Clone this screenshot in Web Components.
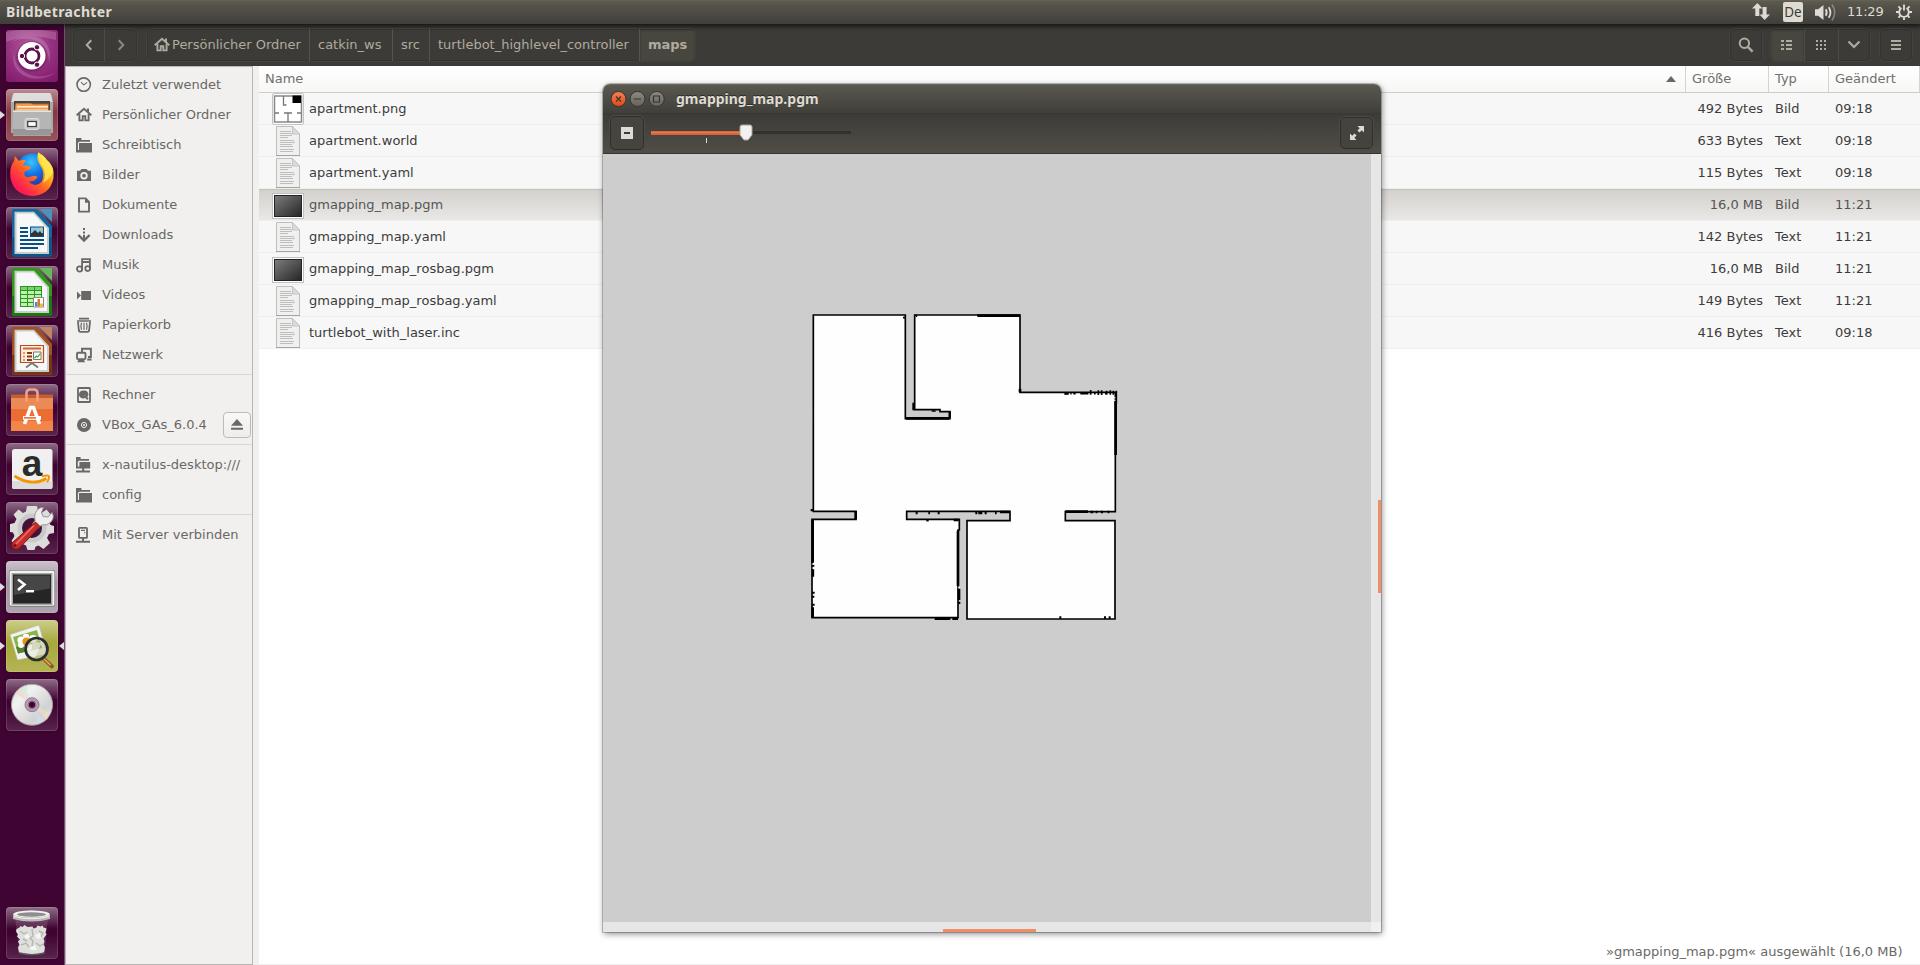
<!DOCTYPE html>
<html lang="de">
<head>
<meta charset="utf-8">
<title>Bildbetrachter</title>
<style>
html,body{margin:0;height:100%;overflow:hidden;background:#fff}
body{font:13px/16px "DejaVu Sans",sans-serif;color:#3c3c3c}
</style>
</head>
<body>
<unity-desktop></unity-desktop>
<script>
const define = (name, css, html) => {
  const t = document.createElement('template');
  t.innerHTML = `<style>*{box-sizing:border-box}${css}</style>${html}`;
  customElements.define(name, class extends HTMLElement {
    constructor() { super(); this.attachShadow({mode: 'open'}).append(t.content.cloneNode(true)); }
  });
};

/* Symbolic 16x16 icons, painted in currentColor */
const S = 'fill="none" stroke="currentColor"';
const SYMBOLS = {
  recent: `<circle cx="7.7" cy="7.6" r="6.7" ${S} stroke-width="1.6"/><path d="M5 5.2L7.7 7.9L11.2 5.4" ${S} stroke-width="1.1"/>`,
  home: `<path d="M.7 8.2L8 1.8l7.3 6.4" ${S} stroke-width="2"/><path d="M11 1.5h2v4h-2z" fill="currentColor"/><path d="M3.4 7v6.4h3.3V9.2h2.6v4.2h3.3V7" ${S} stroke-width="1.9"/>`,
  folder: `<path d="M0 1h5.4v2H14v1.8H3.2L1.9 6v9H0zM3 6h13v9.4H0V13h3z" fill="currentColor"/>`,
  pictures: `<path d="M1 3.8h3L5.5 2h5L12 3.8h3V14H1z" fill="currentColor"/><circle cx="8" cy="8.7" r="2.8" fill="currentColor" stroke="#f1f0ee" stroke-width="1.8"/>`,
  documents: `<path d="M3 1.4h6.6L13 5v9.6H3z" ${S} stroke-width="1.9"/><path d="M9 1v4.7h4z" fill="currentColor"/>`,
  downloads: `<path d="M7 1h2v2H7zM7 4.4h2v2H7zM7 7.8h2v4H7z" fill="currentColor"/><path d="M2.4 8L8 13.5 13.6 8" ${S} stroke-width="2.4"/>`,
  music: `<path d="M6.1 12.4V2.2h7.8v9.6M6.1 5h7.8" ${S} stroke-width="1.8"/><circle cx="3.6" cy="12" r="2.6" ${S} stroke-width="1.8"/><circle cx="11.7" cy="11.6" r="2.4" ${S} stroke-width="1.8"/>`,
  videos: `<path d="M6 4h9v9H5.2V4zM1 4.5l4 4-4 4z" fill="currentColor"/>`,
  trash: `<path d="M3 1.6h10M1 4h14" ${S} stroke-width="1.7"/><path d="M2 5l.9 8.5q.2 1.3 1.5 1.3h7.2q1.3 0 1.5-1.3L14 5" ${S} stroke-width="1.8"/><path d="M5.5 5.7q-1.3 3.8 0 7M8 5.7v7.2M10.5 5.7q1.3 3.8 0 7" ${S} stroke-width="1.2"/>`,
  network: `<path d="M6 5V1.8h8.9V10H12" ${S} stroke-width="1.9"/><rect x="1" y="5.7" width="8.5" height="6.4" rx="1" ${S} stroke-width="1.9"/><path d="M3 12h4.6l1.5 3.2H1.2zM11.5 11.6h4v1.8H11z" fill="currentColor"/>`,
  computer: `<rect x="2" y="1" width="12" height="14" rx=".6" ${S} stroke-width="1.8"/><path d="M8 3.6a4 4 0 1 0 1 7.3L8.2 8l3.2 2.3A4 4 0 0 0 8 3.6z" fill="currentColor"/><path d="M8.3 8.6l3.6 3.6" ${S} stroke-width="2"/>`,
  disc: `<circle cx="8" cy="8" r="7" fill="currentColor"/><circle cx="8" cy="8" r="2.6" fill="none" stroke="#f1f0ee" stroke-width="1"/><circle cx="8" cy="8" r="1" fill="#f1f0ee"/>`,
  remote: `<path d="M0 0h4.6v2H13v1.8H2.7L1.8 5v6H0zM3.4 5h10.8v6.5H0V9.6h3.4zM6.2 11h2v3h-2zM0 13.6h14v2H0z" fill="currentColor"/>`,
  server: `<rect x="3" y=".9" width="8" height="10" rx=".6" ${S} stroke-width="1.8"/><path d="M5 3.4h4M8 5.8h1.4" ${S} stroke-width="1.1"/><path d="M6 11h2v2.8H6zM0 13.8h14v2H0z" fill="currentColor"/>`,
  eject: `<path d="M8 2l6 6.8H2zM2 10.8h12v2H2z" fill="currentColor"/>`,
  back: `<path d="M10.6 2.6L5.4 8l5.2 5.4" ${S} stroke-width="2.2"/>`,
  forward: `<path d="M5.4 2.6L10.6 8l-5.2 5.4" ${S} stroke-width="2.2"/>`,
  search: `<circle cx="6.400" cy="6.200" r="4.700" ${S} stroke-width="2"/><path d="M9.600 9.600L14.600 14.600" ${S} stroke-width="2.400"/>`,
  list: `<path d="M2 3h3v2H2zM7 3h6v2H7zM2 7h3v2H2zM7 7h6v2H7zM2 11h3v2H2zM7 11h6v2H7z" fill="currentColor"/>`,
  grid: `<path d="M3 3h2v2H3zM7 3h2v2H7zM11 3h2v2h-2zM3 7h2v2H3zM7 7h2v2H7zM11 7h2v2h-2zM3 11h2v2H3zM7 11h2v2H7zM11 11h2v2h-2z" fill="currentColor"/>`,
  down: `<path d="M2.500 4.500L8 10l5.500-5.500" ${S} stroke-width="2.200"/>`,
  menu: `<path d="M3 3h10v2H3zM3 7h10v2H3zM3 11h10v2H3z" fill="currentColor"/>`,
  minus: `<path d="M2 2h12v12H2z" fill="currentColor"/><path d="M5 7h6v2H5z" fill="#3c3b37"/>`,
  expand: `<path d="M8.500 1H15v6.500l-2.200-2.200L10.500 7.600 8.400 5.500l2.300-2.300zM1 15V8.500l2.200 2.200L5.500 8.400l2.100 2.100-2.300 2.300L7.500 15z" fill="currentColor"/>`,
  traffic: `<path d="M5.400 0L0 5.500h3.300V13h4V5.500h3.200zM12.600 17L7.500 11.500h3.100V4h4v7.500H18z" fill="currentColor"/>`,
  volume: `<path d="M0 6h3l5-4.200v14.400L3 12H0z" fill="currentColor"/><path d="M10.200 6q1.800 3 0 6" ${S} stroke-width="1.700"/><path d="M13 4q3.200 5 0 10" ${S} stroke-width="1.700"/><path d="M16 1.500q5.500 7.500 0 15" ${S} stroke-width="1.500" opacity=".4"/>`,
  session: `<path d="M8.500.5v6.500" ${S} stroke-width="2"/><path d="M5.800 4.300a5.100 5.100 0 1 0 5.400 0" ${S} stroke-width="2"/><path d="M2.600 2.600l2 2M14.400 2.600l-2 2M0 8.500h3M17 8.500h-3M2.600 14.400l2-2M14.400 14.400l-2-2M8.500 17v-3" ${S} stroke-width="2"/>`
};
customElements.define('sym-icon', class extends HTMLElement {
  connectedCallback() {
    const n = this.getAttribute('name'), s = this.getAttribute('size') || 16, b = this.getAttribute('box') || 16;
    this.attachShadow({mode: 'open'}).innerHTML =
      `<style>:host{display:block;flex:none;width:${s}px;height:${s}px}svg{display:block;overflow:visible}</style><svg width="${s}" height="${s}" viewBox="0 0 ${b} ${b}">${SYMBOLS[n]}</svg>`;
  }
});

/* Launcher artwork on a 52x52 tile */
const office = (a, b, c, inner) => `
<path d="M8 2h23l15 17v29q0 1.500-1.500 1.500h-37Q6 49.500 6 48V4q0-2 2-2z" fill="${a}"/>
<path d="M6 30h40v18q0 1.500-1.500 1.500h-37Q6 49.500 6 48z" fill="${b}"/>
<path d="M8.500 4.800h19.500L43 21v26H8.500z" fill="#c9cccd"/><path d="M10.500 6.500h17L41 21.500V45H10.500z" fill="#f7f7f7"/>
<path d="M33.500 2H46v13z" fill="${c}"/>${inner}`;
const ART = {
  dash: `<defs><radialGradient id="g" cx=".45" cy=".3" r=".9"><stop offset="0" stop-color="#b25a9c"/><stop offset=".5" stop-color="#94307f"/><stop offset="1" stop-color="#7f1567"/></radialGradient></defs>
<rect width="52" height="52" rx="3" fill="url(#g)"/><g fill="#fff" opacity=".17"><path d="M3 14Q18 2 34 8q13 8 9 25 0-18-15-23-14-4-25 4z"/><path d="M8 22Q4 42 24 48q14 3 26-6-15 8-28 2Q8 37 8 22z"/><path d="M0 2Q20-3 50 2v8Q25 2 0 12z"/></g>
<circle cx="25.700" cy="26.500" r="15.300" fill="#5d0f4a" opacity=".35"/><circle cx="25.700" cy="25.700" r="13.800" fill="#fff"/>
<circle cx="26" cy="26" r="7" fill="none" stroke="#57134a" stroke-width="2.800"/><g fill="#57134a" stroke="#fff" stroke-width="1"><circle cx="16" cy="26" r="2.700"/><circle cx="31" cy="17.300" r="2.700"/><circle cx="31" cy="34.700" r="2.700"/></g>`,
  files: `<path d="M6 6h40l1 6v32H5V12z" fill="#a9a9a9"/><path d="M7.500 4h37l2 9H5.500z" fill="#ddd"/><path d="M8 12h36v10H8z" fill="#444"/><path d="M9 14.500h34V22H9z" fill="#b35c1c"/><path d="M10 14.500h15l2 1h15V22H9z" fill="#f39a4c"/><path d="M11 17h31v1.500H11z" fill="#fff0dd"/><path d="M11 20h31v1.500H11z" fill="#f6c38c"/>
<path d="M7 21.500h38V46q0 1-1 1H8q-1 0-1-1z" fill="#b5b5b5"/><path d="M7 21.500h38v1.500H7z" fill="#e4e4e4"/><path d="M7 40h38v6.500H7z" fill="#979797"/><rect x="19" y="29.500" width="14" height="11" rx="2" fill="#c8c8c8" stroke="#ddd"/><rect x="21.700" y="32.500" width="8.600" height="5" fill="#fff" stroke="#444" stroke-width="1.300"/>`,
  firefox: `<defs><radialGradient id="b" cx=".45" cy=".25" r=".7"><stop offset="0" stop-color="#39c5ff"/><stop offset=".5" stop-color="#1273e6"/><stop offset="1" stop-color="#30339c"/></radialGradient><linearGradient id="o" x1=".9" y1=".1" x2=".2" y2=".8"><stop offset="0" stop-color="#fff24a"/><stop offset=".35" stop-color="#ffa51a"/><stop offset=".65" stop-color="#ff5a28"/><stop offset="1" stop-color="#ff1a55"/></linearGradient></defs>
<circle cx="27" cy="23" r="17.500" fill="url(#b)"/>
<path d="M32 5q7 3 8.500 7Q49 18 47.500 30 44 47 26.500 48 8 47 4.500 30 3 19 8 13l1-5 4 5q4-1.500 7-.5l-3 4.500 7 1.500q2 2-1 3l-4.500 2.500q-1 2 .500 4 2.500 2 6 .5 4-1.500 6.500.5-3 5-9 4.500Q29 40 35.500 34 40 25 34 17q-4-6-2-12z" fill="url(#o)"/>
<path d="M32 4q0 9 5 15 4 8 0 16 9-6 10-12-1-7-6-11-4-5-9-8z" fill="#ffe64c" opacity=".9"/>`,
  writer: office('#0f689e', '#0b5687', '#4a93bd', `<g fill="#08507f"><path d="M14 20h8v2h-8zM14 24h8v2h-8zM14 28h8v2h-8zM14 32h24v2H14zM14 36h24v2H14zM14 40h18v2H14z"/><path d="M24 19.500h14V30H24z"/></g><path d="M25 20.500h12V26H25z" fill="#8ec6e4"/><path d="M25 29v-2l4-4 3 3 2-2 3 4v1z" fill="#333"/><circle cx="35.500" cy="21.700" r="1.200" fill="#f4c034"/>`),
  calc: office('#2c9a16', '#177a0c', '#66b95a', `<path d="M14 20h22v21H14z" fill="#2d9423"/><g fill="#bdf3ad"><path d="M15 21h6v3h-6zM22 21h6v3h-6zM29 21h6v3h-6z" fill="#75d566"/><path d="M15 25h6v3h-6zM22 25h6v3h-6zM29 25h6v3h-6zM15 29h6v3h-6zM22 29h6v3h-6zM29 29h6v3h-6zM15 33h6v3h-6zM22 33h6v3h-6zM29 33h6v3h-6zM15 37h6v3h-6zM22 37h6v3h-6z"/></g><path d="M27.500 31.500h10v9.500h-10z" fill="#fff" stroke="#888"/><path d="M29 36h2.500v4.500H29z" fill="#2c98e0"/><path d="M31.500 33H34v7.500h-2.500z" fill="#e0782c"/><path d="M34 37.500h3v3h-3z" fill="#f0be2c"/>`),
  impress: office('#a3501f', '#7c3410', '#c0855f', `<path d="M14.500 20.500h23v17h-23z" fill="#fbeee4" stroke="#b44f1a" stroke-width="1.200"/><path d="M17 22.500h18v2H17z" fill="#d3682b"/><g fill="#8c3c12"><path d="M21 27h5v2h-5zM21 30.500h5v2h-5zM21 34h5v2h-5z"/><path d="M17 27h2v2h-2zM17 30.500h2v2h-2zM17 34h2v2h-2z" fill="#e39463"/></g><path d="M27.500 27h7.500v7.500h-7.500z" fill="#fff" stroke="#777"/><path d="M28.500 33l2-2 1.200 1 2.600-3.500" fill="none" stroke="#37a32b" stroke-width="1.200"/><path d="M26 38l-6 4.500M26 38l6 4.500" stroke="#777" stroke-width="1.800"/>`),
  software: `<path d="M5 10.500h42v6H5z" fill="#c65d30"/><path d="M5 14h42v33H5z" fill="#ea6d33"/><path d="M5 14h42v11H5z" fill="#ec8a55"/><path d="M5 37h42v10H5z" fill="#f48548"/><path d="M20.500 17.500V9q0-3 3-3.500h5q3 .500 3 3.500v8.500" fill="none" stroke="#f2a183" stroke-width="2.600"/>
<path d="M18.500 40L24.500 23.500h3L33.500 40" fill="none" stroke="#fff" stroke-width="3.600"/><path d="M17 32h18v3.800H17z" fill="#fff"/><path d="M18 33.200h12v1.400H18z" fill="#e8591f"/>`,
  amazon: `<rect x="6" y="6" width="40.500" height="40" rx="2.500" fill="#f0f0f0"/><path d="M6 38h40.500v6q0 2-2 2H8q-2 0-2-2z" fill="#dcdcdc"/><text x="26" y="32.500" text-anchor="middle" font-family="Liberation Sans" font-weight="bold" font-size="37" fill="#2b2b2b">a</text><path d="M8.500 33q17 11 32 2.500" fill="none" stroke="#f79400" stroke-width="2.800"/><path d="M36 33.300q6-1.500 7 0 .500 2-2 6" fill="none" stroke="#f79400" stroke-width="2"/>`,
  settings: `<path d="M21 4h10l1 5.500 3.500 1.500 5-3.500 6 7-3.500 5 1.500 3.500 3.500 1v7l-5 1-2 4 3 5-6.500 6-5-3.500-3 1.300L28.500 48h-7L20 43.500l-3.500-1.500-5 3.500-6-6.500 3-5L7 30.500 4 30v-8l4.500-1 2-4-3-4.500 5-5L17 11l3-1.500z" fill="#dcdcdc"/><circle cx="26" cy="26" r="14.500" fill="#c9c9c9"/><circle cx="26" cy="26" r="10" fill="#42123a"/>
<path d="M29 18.500q-1.500-8 4-12 2-1.500 4.500-1l-2 5 1.500 4 5 .5 4-4.500q3 5-1 9.500-4 4-9.500 3l-4 4-5-5z" fill="#eee" stroke="#8d8d8d" stroke-width=".9"/><path d="M29.500 20l4.500 4.500-21 22q-3.500 1.800-6-.5-2-2.500-.5-5.500z" fill="#c92c28" stroke="#7f1512"/><path d="M28 23.500L10 42" stroke="#e8736c" stroke-width="1.600"/><circle cx="9" cy="43.500" r="1.500" fill="#7c0f0d"/>`,
  terminal: `<rect x="3" y="9" width="46" height="37" rx="2" fill="#858585"/><rect x="3.700" y="9.700" width="44.600" height="35" rx="1.500" fill="#f2f2f2"/><rect x="5.500" y="12" width="41" height="32" fill="#a6a6a6"/><rect x="7" y="13.500" width="38" height="29" fill="#252525"/><path d="M8 14.500h36v13L8 34z" fill="#464646"/><path d="M12 18.500l6.500 5L12 29" fill="none" stroke="#fff" stroke-width="2.600"/><path d="M20 29h8v2.400h-8z" fill="#fff"/>`,
  viewer: `<path d="M4 14.500L33 5l8 29-29.500 6z" fill="#f2f2f2" stroke="#b9b9a0" stroke-width=".6"/><path d="M7 17l24-7 5 18-24 5.500z" fill="#8bb54a"/><path d="M10 27l24-6 2 7-24 5.500z" fill="#55822d"/><g fill="#fff"><circle cx="15" cy="20" r="3.600"/><circle cx="20" cy="17" r="3.200"/><circle cx="15" cy="25" r="3"/><circle cx="22" cy="27" r="4"/><circle cx="27" cy="19" r="4"/></g><circle cx="20.500" cy="21.500" r="4" fill="#e89316"/>
<path d="M38 39l8 7.500" stroke="#8a5b25" stroke-width="3.800" stroke-linecap="round"/><path d="M37.500 38.500l7 6.700" stroke="#e0a85f" stroke-width="1.600"/><circle cx="30.500" cy="29" r="10.500" fill="#c6c9a0" fill-opacity=".6"/><path d="M21.500 29q4-9 14-6l-6 14-6 1z" fill="#fff" opacity=".55"/><circle cx="30.500" cy="29" r="11" fill="none" stroke="#2a2e33" stroke-width="2.700"/>`,
  disc: `<defs><linearGradient id="d" x2="1" y2="1"><stop offset="0" stop-color="#d9d9d9"/><stop offset=".3" stop-color="#f1f1f1"/><stop offset=".7" stop-color="#d2d2d4"/><stop offset="1" stop-color="#e8e8e8"/></linearGradient></defs><circle cx="26" cy="25.700" r="20.500" fill="url(#d)" stroke="#a9a1a8"/><g opacity=".5"><path d="M26 26L9 14l5-5z" fill="#f6cdbd"/><path d="M26 26L14 9l5-3z" fill="#c5e9d2"/><path d="M26 26l17 12-5 5z" fill="#f2c4cb"/><path d="M26 26l12 16-6 3z" fill="#c1e2f0"/><path d="M26 26l18 8-3 7z" fill="#f3e6b5"/></g><circle cx="26" cy="25.700" r="7" fill="#b59cb1" stroke="#947791"/><circle cx="26" cy="25.700" r="4.300" fill="#907087"/><circle cx="26" cy="25.700" r="3" fill="#3f0433"/>`,
  trash: `<path d="M9 10h33l-3.500 36q-12.500 4-25 0z" fill="#fff" opacity=".12"/><path d="M10.500 22l3-1.500 1-1.500 2 1 2-2 3 2 5-.5 1 2 3-1 1-2 3 1 2-1 1 2 3 1-1 4 1 2-3 4 1 3-1 3 1.500 3-1 5q-10 3.500-25 0l-1-5 1.500-3-1.500-3 2-2-3-3 1-2-2-3z" fill="#dfe0dc"/><path d="M26 22l1 7-3 2 3 3-1 5M14 24l4 3 3-2M33 24l4 2-2 4M15 38l5-2 3 4M30 36l4 3 3-2M17 32l4 2" fill="none" stroke="#b4b7b1" stroke-width="1.400"/><path d="M18 29l4-2 2 3-3 2zM29 28l5-2 1 5-4 1zM24 41l5-3 2 5h-6z" fill="#f6f6f4"/><path d="M13.500 46q12.500 3.500 25 0" fill="none" stroke="#555e58" stroke-width="1.500"/>
<path d="M7 7q18.500-7 37 0v5q-18.500 5-37 0z" fill="#b9bcb8"/><ellipse cx="25.500" cy="7" rx="18" ry="3.600" fill="#f0f1ee"/><ellipse cx="25.500" cy="7.500" rx="14.500" ry="2.200" fill="#8f8b8f"/><path d="M8 9.500q17 4.500 35 0" stroke="#f3f3f1" fill="none"/>`
};
customElements.define('launcher-tile', class extends HTMLElement {
  connectedCallback() {
    const bg = this.getAttribute('tint') || 'transparent', run = this.hasAttribute('running'), act = this.hasAttribute('active');
    this.attachShadow({mode: 'open'}).innerHTML = `<style>
:host{display:flex;align-items:center;height:52px;flex:none;position:relative}
.tile{width:52px;height:52px;margin-left:6px;border-radius:4px;background:linear-gradient(rgba(255,255,255,.42),rgba(255,255,255,0) 42%),linear-gradient(rgba(255,255,255,0) 50%,rgba(255,255,255,.13)),${bg};box-shadow:inset 0 0 0 1px rgba(255,255,255,.14),0 0 3px rgba(0,0,0,.35)}
svg{display:block}
.l,.r{position:absolute;top:22px;border:4.500px solid transparent}.l{left:0;border-left:5px solid #ddd;border-right:0}.r{right:0;border-right:5px solid #ddd;border-left:0}
.l+.tile{margin-left:6px}
</style>${run ? '<i class="l"></i>' : ''}<div class="tile"><svg width="52" height="52">${ART[this.getAttribute('art')]}</svg></div>${act ? '<i class="r"></i>' : ''}`;
  }
});

define('unity-launcher', `
:host{display:flex;flex-direction:column;gap:7px;width:65px;padding:6px 0;background:#400432;border-right:1px solid #7d4a74}
.space{flex:1}`, `
<launcher-tile art="dash"></launcher-tile>
<launcher-tile art="files" tint="#883a44" running></launcher-tile>
<launcher-tile art="firefox"></launcher-tile>
<launcher-tile art="writer"></launcher-tile>
<launcher-tile art="calc"></launcher-tile>
<launcher-tile art="impress"></launcher-tile>
<launcher-tile art="software"></launcher-tile>
<launcher-tile art="amazon"></launcher-tile>
<launcher-tile art="settings"></launcher-tile>
<launcher-tile art="terminal" tint="#a596a4" running></launcher-tile>
<launcher-tile art="viewer" tint="#a9a93c" running active></launcher-tile>
<launcher-tile art="disc"></launcher-tile>
<div class="space"></div>
<launcher-tile art="trash"></launcher-tile>`);

define('unity-panel', `
:host{display:flex;align-items:center;height:24px;padding:0 8px 0 6px;color:#dfdbd2;background:linear-gradient(#69684f 0,#5e5c51 1px,#57554c 4px,#403f3a 23px);box-shadow:0 1px 5px #111;position:relative;z-index:1}
b{font:bold 14px/24px "Noto Sans",sans-serif;letter-spacing:.35px;flex:1}
.de{width:20px;height:20px;margin:-1px 12px 0 13px;border-radius:2px;background:#dfdbd2;color:#3c3b37;font:13.500px/21px "Noto Sans",sans-serif;text-align:center}
.t{width:36px;margin:-1px 13px 0 13px;font-size:13px;letter-spacing:-.2px;white-space:nowrap}`, `
<b>Bildbetrachter</b>
<sym-icon name="traffic" size="18" box="18"></sym-icon><span class="de">De</span>
<sym-icon name="volume" size="19" box="18"></sym-icon><span class="t">11:29</span>
<sym-icon name="session" size="16" box="17"></sym-icon>`);

define('tool-button', `
:host{display:flex;align-items:center;justify-content:center;width:33px;height:32px;border-left:1px solid #4d4c46}
:host(:first-child){border-left:0}
:host([on]){background:#48473f;box-shadow:inset 0 1px 2px #2c2b28}`, `<slot></slot>`);
define('button-group', `
:host{display:flex;height:32px;border-radius:5px;overflow:hidden;box-shadow:inset 0 0 0 1px #353430,0 0 0 1px #43423d}`, `<slot></slot>`);

define('path-crumb', `
:host{display:flex;align-items:center;height:32px;padding:0 8px;border-left:1px solid #55544d;white-space:nowrap}
:host(:first-child){border-left:0}
:host([on]){background:#48473f;font-weight:bold;box-shadow:inset 0 1px 2px #2c2b28}`, `<slot></slot>`);

define('files-toolbar', `
:host{display:flex;align-items:center;height:42px;padding:0 8px;color:#b0ab9f;background:linear-gradient(#2d2c29 0,#3c3b37 6px,#3c3b37)}
.space{flex:1}path-crumb sym-icon{margin:0 2px 0 0}
.nav{margin-right:10px}.m{margin:0 10px 0 9px}`, `
<button-group class="nav"><tool-button style="width:31px"><sym-icon name="back" size="14"></sym-icon></tool-button><tool-button style="color:#8d8980"><sym-icon name="forward" size="14"></sym-icon></tool-button></button-group>
<button-group class="path">
<path-crumb style="width:162px;padding-left:7px"><sym-icon name="home"></sym-icon>Persönlicher Ordner</path-crumb>
<path-crumb style="width:83px">catkin_ws</path-crumb>
<path-crumb style="width:37px">src</path-crumb>
<path-crumb style="width:210px">turtlebot_highlevel_controller</path-crumb>
<path-crumb on style="width:56px">maps</path-crumb>
</button-group>
<div class="space"></div>
<button-group><tool-button style="width:32px"><sym-icon name="search"></sym-icon></tool-button></button-group>
<button-group class="m"><tool-button on style="padding-right:1px"><sym-icon name="list"></sym-icon></tool-button><tool-button style="width:34px;padding-right:1px"><sym-icon name="grid"></sym-icon></tool-button><tool-button style="width:32px;padding-right:1px"><sym-icon name="down"></sym-icon></tool-button></button-group>
<button-group><tool-button style="width:32px"><sym-icon name="menu"></sym-icon></tool-button></button-group>`);

customElements.define('place-item', class extends HTMLElement {
  connectedCallback() {
    this.attachShadow({mode: 'open'}).innerHTML = `<style>
:host{display:flex;align-items:center;height:30px;padding-left:10px;gap:10px;white-space:nowrap}
.txt{flex:1}
.e{display:flex;align-items:center;justify-content:center;box-sizing:border-box;width:28px;height:26px;border:1px solid #bdbbb8;border-radius:4px;background:linear-gradient(#f9f8f7,#eeedeb)}
</style><sym-icon name="${this.getAttribute('icon')}"></sym-icon><span class="txt"><slot></slot></span>${this.hasAttribute('eject') ? '<span class="e"><sym-icon name="eject"></sym-icon></span>' : ''}`;
  }
});
define('places-sidebar', `
:host{display:block;width:188px;padding:3px 1px 0 0;color:#696865;background:#f1f0ee;border:1px solid #b8b6b4}
hr{height:1px;margin:4px -1px 5px 0;border:0;background:#d8d7d5}`, `
<place-item icon="recent">Zuletzt verwendet</place-item>
<place-item icon="home">Persönlicher Ordner</place-item>
<place-item icon="folder">Schreibtisch</place-item>
<place-item icon="pictures">Bilder</place-item>
<place-item icon="documents">Dokumente</place-item>
<place-item icon="downloads">Downloads</place-item>
<place-item icon="music">Musik</place-item>
<place-item icon="videos">Videos</place-item>
<place-item icon="trash">Papierkorb</place-item>
<place-item icon="network">Netzwerk</place-item>
<hr>
<place-item icon="computer">Rechner</place-item>
<place-item icon="disc" eject>VBox_GAs_6.0.4</place-item>
<hr>
<place-item icon="remote">x-nautilus-desktop:///</place-item>
<place-item icon="folder">config</place-item>
<hr>
<place-item icon="server">Mit Server verbinden</place-item>`);

const THUMBS = {
  text: `<path d="M4.500.5h16l7 7.500v21.500h-23z" fill="#f0f0ef" stroke="#bdbdbd"/><path d="M20.500.5V8h7z" fill="#dcdcdc" stroke="#bdbdbd" stroke-width=".8"/><path d="M4 29.500h24" stroke="#a4a4a4"/><path d="M8 5.500h11M8 7.500h12M8 9.500h12M8 11.500h8M8 14.500h14M8 16.500h15M8 18.500h12M8 20.500h13M8 23.500h14M8 25.500h13" stroke="#bdbdbd"/>`,
  map: `<rect x=".5" y="-.5" width="31" height="31" rx="1.500" fill="#fff" stroke="#c4c4c2"/><rect x="2.500" y="2" width="27" height="26" fill="#fff" stroke="#888" stroke-width="1.500"/><path d="M20.500 1.500H29V9h-8.500z" fill="#000"/><path d="M11.500 2v9h3M3 19h4M12 19h8M25 19h4M16 19v9" fill="none" stroke="#777" stroke-width="1.300"/>`,
  image: `<defs><linearGradient id="i" x2="1" y2="1"><stop offset="0" stop-color="#7e7e7e"/><stop offset="1" stop-color="#252525"/></linearGradient></defs><rect x=".5" y="3.500" width="31" height="25" fill="#fff" stroke="#c0c0be"/><rect x="2.500" y="5.500" width="27" height="21" fill="url(#i)" stroke="#222"/>`
};
customElements.define('file-row', class extends HTMLElement {
  connectedCallback() {
    const a = n => this.getAttribute(n);
    this.attachShadow({mode: 'open'}).innerHTML = `<style>
:host{display:grid;grid-template-columns:1427px 83px 60px 91px;align-items:center;height:32px;box-sizing:border-box;background:#f7f7f7;border-bottom:1px solid #eeeeed}
:host([selected]){color:#555;background:linear-gradient(#d3d0cc,#e9e8e6);box-shadow:inset 0 1px #c5c2bd}
.n{display:flex;align-items:center;gap:5px;padding-left:13px}.s{text-align:right;padding-right:6px}.c{padding-left:6px}
.s,.c,.t{padding-top:1px}
svg{display:block;overflow:visible}
</style><span class="n"><svg width="32" height="30">${THUMBS[a('thumb')]}</svg><span class="t"><slot></slot></span></span><span class="s">${a('size')}</span><span class="c">${a('kind')}</span><span class="c">${a('time')}</span>`;
  }
});
define('file-list', `
:host{display:flex;flex-direction:column;width:1661px;background:#fff;border-bottom:1px solid #eee}
.h{display:grid;grid-template-columns:1427px 83px 60px 91px;height:27px;color:#706f6c;background:linear-gradient(#fff,#f7f7f6);border-bottom:1px solid #cfcecc}
.h span{display:flex;align-items:center;padding:0 6px;border-right:1px solid #d5d4d2}
.h i{margin:0 3px 0 auto;border:5px solid transparent;border-top:0;border-bottom:6px solid #696865}
.f{margin:auto 0 0 auto;width:325px;height:24px;padding:4px 0 0 11px;color:#6a6965;white-space:nowrap}`, `
<div class="h"><span>Name<i></i></span><span>Größe</span><span>Typ</span><span>Geändert</span></div>
<file-row thumb="map" size="492 Bytes" kind="Bild" time="09:18">apartment.png</file-row>
<file-row thumb="text" size="633 Bytes" kind="Text" time="09:18">apartment.world</file-row>
<file-row thumb="text" size="115 Bytes" kind="Text" time="09:18">apartment.yaml</file-row>
<file-row selected thumb="image" size="16,0 MB" kind="Bild" time="11:21">gmapping_map.pgm</file-row>
<file-row thumb="text" size="142 Bytes" kind="Text" time="11:21">gmapping_map.yaml</file-row>
<file-row thumb="image" size="16,0 MB" kind="Bild" time="11:21">gmapping_map_rosbag.pgm</file-row>
<file-row thumb="text" size="149 Bytes" kind="Text" time="11:21">gmapping_map_rosbag.yaml</file-row>
<file-row thumb="text" size="416 Bytes" kind="Text" time="09:18">turtlebot_with_laser.inc</file-row>
<div class="f">»gmapping_map.pgm« ausgewählt (16,0 MB)</div>`);

define('files-window', `
:host{display:flex;flex-direction:column;flex:1;min-width:0}
.b{display:flex;flex:1;gap:6px;background:#f1f0ee}`, `
<files-toolbar></files-toolbar>
<div class="b"><places-sidebar></places-sidebar><file-list></file-list></div>`);

/* Occupancy grid: free space in white, walls in black */
define('occupancy-map', `:host{display:block;width:768px;height:768px;background:#cdcdcd}svg{display:block}`, `
<svg width="768" height="768"><g transform="translate(187 146) scale(.33333)">
<path d="M70 45H346V356H480V335H450V329H374V45H690V277H976V635H826V662H975V957H531V662H660V634H350V658H508V690H504V953H66V658H198V634H70Z" fill="#fefefe" stroke="#000" stroke-width="5"/>
<g fill="none" stroke="#000" stroke-width="8">
<path d="M562 47H690M348 355H478M371 308V331M977 304V465M826 635H894M197 633V658M68 660V788M504 692V858M507 866V900M434 956H481M487 956H504M68 922V953M690 266V277M66 627V634"/>
<path d="M479 335V355M69 808V830M630 636H660M491 660H506" stroke-width="7"/></g>
<g fill="none" stroke="#000" stroke-width="5">
<path d="M376 45L381 50M339 53H346M425 333H437M979 272V310"/>
<path d="M823 281H836" stroke-width="7"/><path d="M841 281h4M850 281h7M871 281H895M902 270V284M912 281h5M925 271V285M935 271V285M945 281h5M950 272V284M961 271V284M970 272V284"/>
<path d="M377 639h6M415 639h5M443 639h6M556 639h6M565 639h12M584 639h6M615 639h5M409 661h7M901 636h9M917 636h5M933 636h6M953 636h5" stroke-width="7"/>
<path d="M66 797H73M66 878H74M66 890H73M66 914H74M508 905V912M811 949V957M945 949V957M959 949V957" stroke-width="6"/></g>
<path d="M70 790v5M70 802v4M507 860v5M974 292v3M974 299v3" stroke="#fefefe" stroke-width="5"/>
</g></svg>`);

define('image-viewer', `
:host{display:block;width:778px;height:848px;border-radius:7px 7px 0 0;box-shadow:0 0 0 1px rgba(0,0,0,.22),1px 2px 6px rgba(0,0,0,.45)}
.title{display:flex;align-items:center;height:29px;padding-left:8px;gap:4px;border-radius:7px 7px 0 0;color:#dfdbd2;background:linear-gradient(#6a685e 0,#59574e 2px,#403f3a)}
.title b{margin-left:7px;font:bold 14px/29px "Noto Sans",sans-serif;text-shadow:0 -1px #2b2a27}
.title svg{display:block;flex:none}
.tools{display:flex;align-items:center;height:41px;padding:0 8px 1px 7px;color:#dfdbd2;background:linear-gradient(#3c3b37,#504e46);border-top:1px solid #393834;border-bottom:1px solid #35342f}
.bt{display:flex;align-items:center;justify-content:center;width:34px;height:34px;border-radius:5px;border:1px solid #2f2e2b;box-shadow:0 0 0 1px #4c4b45;background:#45443e}
.fs{width:33px;height:32px;margin-left:auto;background:#44433d}
.sl{display:block;margin-left:7px}
.body{display:grid;grid-template-columns:768px 10px;grid-template-rows:768px 10px}
.v{display:flex;align-items:center;justify-content:flex-end;background:#e6e6e6}.v i{width:3px;height:93px;margin-top:17px;background:#ef8f68}
.h{display:flex;align-items:flex-end;background:#e6e6e6}.h i{height:3px;width:93px;margin-left:340px;background:#ef8f68}
.k{background:#f1f0ee}`, `
<div class="title">
<svg width="54" height="16"><defs><linearGradient id="c" x2="0" y2="1"><stop offset="0" stop-color="#f58058"/><stop offset="1" stop-color="#df4a16"/></linearGradient><linearGradient id="m" x2="0" y2="1"><stop offset="0" stop-color="#8c8a81"/><stop offset="1" stop-color="#65635b"/></linearGradient></defs>
<g stroke="#35342f"><circle cx="7.500" cy="8" r="7.500" fill="url(#c)"/><circle cx="26.500" cy="8" r="7.500" fill="url(#m)"/><circle cx="45.700" cy="8" r="7.500" fill="url(#m)"/></g>
<path d="M5 5.500l5 5M10 5.500l-5 5M23 8h7M42.500 5h6v6h-6z" fill="none" stroke="#35342f" stroke-width="1.200"/></svg>
<b>gmapping_map.pgm</b></div>
<div class="tools"><span class="bt"><sym-icon name="minus"></sym-icon></span>
<svg class="sl" width="202" height="34"><rect y="15" width="200" height="4" rx="1" fill="#32312d"/><path d="M95 18.500h105" stroke="#45443e"/><rect y="15" width="92" height="4" fill="#d9643a"/><path d="M0 16.500h92" stroke="#e87c50"/><path d="M55.500 22v5" stroke="#dfdbd2"/><path d="M91 9h8q2 0 2 2v8l-4 5h-4l-4-5v-8q0-2 2-2z" fill="#f1f1f0" stroke="#a8a6a0"/></svg>
<span class="bt fs"><sym-icon name="expand"></sym-icon></span></div>
<div class="body"><occupancy-map></occupancy-map><div class="v"><i></i></div><div class="h"><i></i></div><div class="k"></div></div>`);

define('unity-desktop', `
:host{display:flex;flex-direction:column;width:1920px;height:965px;position:relative;overflow:hidden}
.main{display:flex;flex:1;min-height:0}
image-viewer{position:absolute;left:603px;top:84px}`, `
<unity-panel></unity-panel>
<div class="main"><unity-launcher></unity-launcher><files-window></files-window></div>
<image-viewer></image-viewer>`);
</script>
</body>
</html>
